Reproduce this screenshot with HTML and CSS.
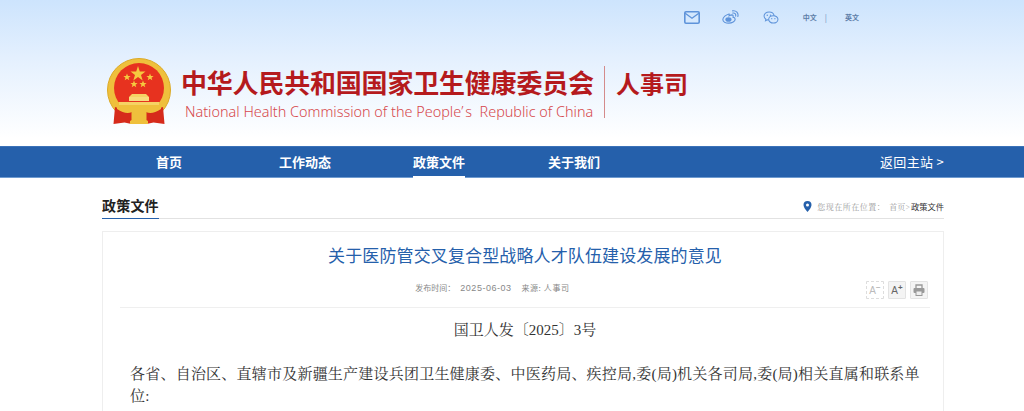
FILE: index.html
```html
<!DOCTYPE html>
<html lang="zh-CN">
<head>
<meta charset="utf-8">
<title>关于医防管交叉复合型战略人才队伍建设发展的意见</title>
<link rel="stylesheet" href="styles.css">
</head>
<body>
<header class="masthead">
  <div class="toolbar">
    <svg class="tool-icon icon-mail" width="16" height="13" viewBox="0 0 16 13"><rect x="0.800" y="0.800" width="14.400" height="11.400" rx="1.200" fill="none" stroke="#5e93da" stroke-width="1.600"/><path d="M1.200 2.200 8 7.200l6.800-5" fill="none" stroke="#5e93da" stroke-width="1.300"/></svg>
    <svg class="tool-icon" width="17" height="14" viewBox="0 0 18 15"><path d="M7.500 4.200C4.200 5 .8 7.600.8 10.200c0 2.400 3 3.900 6.200 3.900 3.700 0 7-1.900 7-4.300 0-1.500-1.500-2-2.300-2.200.5-1.300.1-2.300-1.200-2.400-1 0-2 .4-3 1 .2-1.200 0-2.200 0-2z" fill="none" stroke="#5e93da" stroke-width="1.200"/><ellipse cx="6.800" cy="10.200" rx="3.300" ry="2.500" fill="#5e93da"/><path d="M11.500 3.300c2-.5 3.600 1.200 3 3.200M11.200.9c3.800-.8 6.800 2.400 5.600 6.100" fill="none" stroke="#5e93da" stroke-width="1.200" stroke-linecap="round"/></svg>
    <svg class="tool-icon" width="16" height="13" viewBox="0 0 17 14"><path d="M12 5.200C11.500 2.800 9.200 1 6.500 1 3.400 1 1 3 1 5.500c0 1.400.8 2.600 2 3.400l-.4 1.600 1.900-1c.6.200 1.200.3 1.600.3" fill="none" stroke="#5e93da" stroke-width="1.100"/><ellipse cx="11" cy="9" rx="5" ry="4" fill="none" stroke="#5e93da" stroke-width="1.100"/><circle cx="4.500" cy="4.500" r=".8" fill="#5e93da"/><circle cx="8" cy="4.500" r=".8" fill="#5e93da"/><circle cx="9.300" cy="8.300" r=".7" fill="#5e93da"/><circle cx="12.700" cy="8.300" r=".7" fill="#5e93da"/></svg>
    <span class="lang">中文</span><span class="lang-sep">|</span><span class="lang">英文</span>
  </div>
  <div class="brand">
    <svg class="emblem" width="66" height="70" viewBox="0 0 66 70">
      <circle cx="33" cy="33" r="31.500" fill="#efc03c" stroke="#dcaa26" stroke-width="1"/>
      <circle cx="33" cy="31" r="25" fill="#e7321f"/>
      <rect x="9" y="45" width="48" height="12" fill="#efc03c"/>
      <polygon points="32,9 33.800,14.500 39.500,14.500 35,18 36.700,23.500 32,20.100 27.300,23.500 29,18 24.500,14.500 30.200,14.500" fill="#f5c93f"/>
      <polygon points="21,16.500 22,19 24.600,19 22.500,20.700 23.300,23.300 21,21.700 18.700,23.300 19.500,20.700 17.400,19 20,19" fill="#f5c93f"/>
      <polygon points="44,16.500 45,19 47.600,19 45.500,20.700 46.300,23.300 44,21.700 41.700,23.300 42.500,20.700 40.400,19 43,19" fill="#f5c93f"/>
      <polygon points="28,23.500 29,26 31.600,26 29.500,27.700 30.300,30.300 28,28.700 25.700,30.300 26.500,27.700 24.400,26 27,26" fill="#f5c93f"/>
      <polygon points="37,23.500 38,26 40.600,26 38.500,27.700 39.300,30.300 37,28.700 34.700,30.300 35.500,27.700 33.400,26 36,26" fill="#f5c93f"/>
      <path d="M26 37h14l3 3H23z" fill="#f6d264"/>
      <rect x="23" y="40" width="20" height="4" fill="#f8dc7c"/>
      <rect x="13" y="45" width="40" height="3" fill="#f6d264"/>
      <path d="M9 50 7.500 67l11-1.500 7 1.500V55zM57 50l1.500 17-11-1.500-7 1.500V55z" fill="#d62a1b"/>
      <path d="M11 49c6 3 11 4 14 2 2-2 5-3 8-3s6 1 8 3c3 2 8 1 14-2v3c-6 4-11 5-15 3-2 1-4 2-7 2s-5-1-7-2c-4 2-9 1-15-3z" fill="#efc03c"/>
      <path d="M24 64c3-2 6-3 9-1 3-2 6-1 9 1v3H24z" fill="#efc03c"/>
      <rect x="30" y="56" width="6" height="8" fill="#efc03c"/>
    </svg>
    <div class="brand-text">
      <div class="brand-cn">中华人民共和国国家卫生健康委员会</div>
      <div class="brand-en">National Health Commission of the People<span class="apos">’</span>s&nbsp; Republic of China</div>
    </div>
    <div class="brand-dept">人事司</div>
  </div>
</header>
<nav class="mainnav">
  <div class="nav-inner">
    <a class="nav-item nav-home">首页</a>
    <a class="nav-item nav-work">工作动态</a>
    <a class="nav-item is-active">政策文件</a>
    <a class="nav-item">关于我们</a>
    <a class="nav-back">返回主站 &gt;</a>
  </div>
</nav>
<main class="page">
  <div class="crumbbar">
    <h2 class="section-title">政策文件</h2>
    <div class="crumbs">
      <svg class="pin" width="9" height="11" viewBox="0 0 8 11"><path d="M4 0a4 4 0 0 0-4 4c0 2.800 4 7 4 7s4-4.200 4-7a4 4 0 0 0-4-4z" fill="#2560ab"/><circle cx="4" cy="4" r="1.500" fill="#fff"/></svg>
      <span class="crumb-label">您现在所在位置：</span><span class="crumb-home">首页&gt;</span><span class="crumb-now">政策文件</span>
    </div>
  </div>
  <article class="card">
    <h1 class="doc-title">关于医防管交叉复合型战略人才队伍建设发展的意见</h1>
    <div class="meta">
      <span class="meta-text">发布时间：</span><span class="meta-date">2025-06-03</span><span class="meta-text meta-source">来源: 人事司</span>
      <div class="meta-tools">
        <span class="tool-btn is-off">A<sup>−</sup></span>
        <span class="tool-btn">A<sup>+</sup></span>
        <span class="tool-btn"><svg width="12" height="12" viewBox="0 0 12 12"><path d="M3 4V1h6v3" fill="none" stroke="#999" stroke-width="1.300"/><rect x="0.500" y="4" width="11" height="5" rx="1" fill="#999"/><rect x="3" y="7" width="6" height="4.500" fill="#eee" stroke="#999"/></svg></span>
      </div>
    </div>
    <div class="doc-body">
      <p class="doc-no">国卫人发〔2025〕3号</p>
      <p class="doc-para">各省、自治区、直辖市及新疆生产建设兵团卫生健康委、中医药局、疾控局,委(局)机关各司局,委(局)相关直属和联系单位:</p>
    </div>
  </article>
</main>
</body>
</html>
```
FILE: styles.css
```css
* { box-sizing: border-box; }
html, body { margin: 0; padding: 0; }
body {
  height: 411px;
  overflow: hidden;
  background: #fff;
  font-family: "Noto Sans CJK SC", "Noto Sans", sans-serif;
}
.masthead {
  height: 146px;
  background: linear-gradient(180deg, #cde4fd 0%, #e4f0fe 40%, #ffffff 95%);
}
.toolbar {
  height: 34px;
  padding-right: 165px;
  display: flex;
  align-items: center;
  justify-content: flex-end;
}
.tool-icon { margin-right: 24px; }
.icon-mail { margin-right: 22px; }
.lang { font-size: 7px; color: #5d7ea8; font-weight: 700; }
.lang-sep { font-size: 8px; color: #6a8fbf; margin: 0 18px 0 8px; }
.brand {
  display: flex;
  align-items: flex-start;
  padding: 22px 0 0 106px;
}
.emblem { margin-right: 9px; margin-top: 1px; flex: none; }
.brand-text { padding-top: 11px; width: 424px; flex: none; }
.brand-cn {
  font-size: 26px;
  line-height: 30px;
  font-weight: 700;
  color: #b51a1d;
  letter-spacing: -0.2px;
  white-space: nowrap;
}
.brand-en {
  margin-top: 5px;
  padding-left: 4px;
  font-family: "Noto Sans", sans-serif;
  font-size: 14.42px;
  line-height: 20px;
  font-weight: 300;
  color: #d6484c;
  white-space: nowrap;
}
.apos { letter-spacing: 2px; }
.brand-dept {
  margin-top: 10px;
  height: 52px;
  border-left: 1px solid #d48b8b;
  margin-left: -1px;
  padding-left: 11px;
  font-size: 24px;
  line-height: 34px;
  font-weight: 700;
  color: #b51a1d;
  white-space: nowrap;
}
.mainnav {
  height: 32px;
  background: #2560ab;
  border-top: 1px solid #3b72b8;
  border-bottom: 1px solid #6f9bd0;
}
.nav-inner {
  height: 30px;
  display: flex;
  align-items: stretch;
  padding: 0 80px 0 156px;
}
.nav-item {
  margin-right: 83px;
  font-size: 13px;
  line-height: 29px;
  font-weight: 700;
  color: #fff;
}
.nav-home { margin-right: 97px; }
.nav-work { margin-right: 82px; }
.is-active { border-bottom: 2px solid #fff; height: 31px; }
.nav-back {
  margin-left: auto;
  font-size: 13px;
  line-height: 29px;
  color: #fff;
  letter-spacing: 0.3px;
}
.page { padding: 0 80px 0 102px; }
.crumbbar {
  height: 41px;
  border-bottom: 1px solid #e2e2e2;
  display: flex;
  justify-content: space-between;
  align-items: flex-end;
}
.section-title {
  margin: 0 0 -1px;
  height: 26px;
  font-size: 14px;
  line-height: 25px;
  font-weight: 700;
  color: #222;
  letter-spacing: 0.2px;
  border-bottom: 1px solid #2560ab;
}
.crumbs {
  height: 24px;
  display: flex;
  align-items: center;
  font-family: "Noto Serif CJK SC", serif;
  font-size: 8px;
  color: #999;
}
.pin { margin-right: 5px; }
.crumb-label { margin-right: 4px; letter-spacing: 0.5px; }
.crumb-home { margin-right: 1px; }
.crumb-now { font-family: "Noto Sans CJK SC", sans-serif; font-size: 8.25px; color: #333; }
.card {
  margin-top: 12px;
  border: 1px solid #eeeeee;
  border-bottom: 0;
  height: 200px;
  padding: 0 13px 0 17px;
}
.doc-title {
  margin: 11px 0 0;
  font-size: 17px;
  line-height: 24px;
  font-weight: 400;
  color: #2560ab;
  letter-spacing: 0.13px;
  text-align: center;
}
.meta {
  height: 41px;
  border-bottom: 1px solid #efefef;
  position: relative;
  display: flex;
  align-items: center;
  justify-content: center;
  padding: 1px 65px 0 0;
}
.meta-text { font-size: 8px; color: #888; }
.meta-source { letter-spacing: 0.6px; }
.meta-date {
  margin: 0 10px 0 5px;
  font-family: "Liberation Sans", sans-serif;
  font-size: 9px;
  letter-spacing: 0.5px;
  color: #888;
}
.meta-tools {
  position: absolute;
  right: 2px;
  top: 14px;
  display: flex;
  gap: 4px;
}
.tool-btn {
  width: 18px;
  height: 18px;
  border: 1px solid #e3e3e3;
  border-radius: 1px;
  background: #f4f4f4;
  display: flex;
  align-items: center;
  justify-content: center;
  font-size: 10px;
  color: #666;
  font-family: "Liberation Sans", sans-serif;
}
.tool-btn sup { font-size: 8px; line-height: 0; font-weight: 700; margin-top: -5px; }
.is-off { border: 1px dashed #ddd; background: #fff; color: #bbb; }
.doc-body {
  font-family: "Liberation Serif", "Noto Serif CJK SC", serif;
  color: #333;
  font-size: 15px;
}
.doc-no { margin: 11px 0 0; line-height: 22px; text-align: center; }
.doc-para { margin: 22px 0 0; padding: 0 10px; line-height: 22px; letter-spacing: 0.22px; }
```
